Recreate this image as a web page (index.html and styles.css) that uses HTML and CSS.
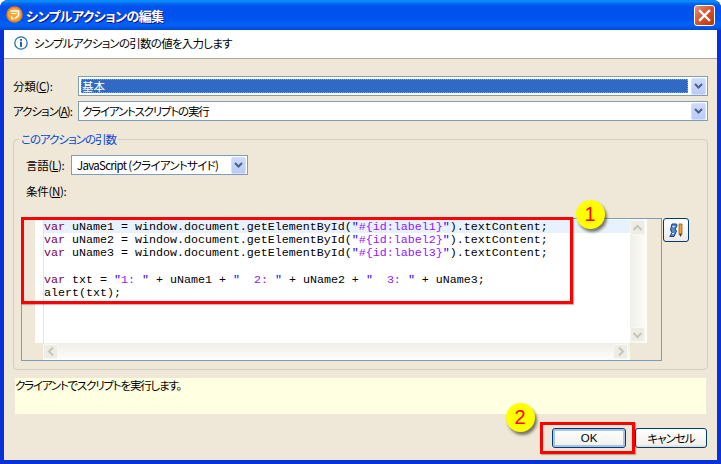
FILE: index.html
```html
<!DOCTYPE html>
<html lang="ja">
<head>
<meta charset="utf-8">
<title>シンプルアクションの編集</title>
<link rel="stylesheet" href="styles.css">
</head>
<body>
<div class="window">
  <header class="titlebar">
    <svg class="app-icon" width="17" height="17" viewBox="0 0 17 17"><circle cx="8.5" cy="8.5" r="8.2" fill="#e87f14"/><circle cx="8.5" cy="8.5" r="6.6" fill="#f9a63a"/><path d="M4.5 5h8v4.5l-3.500 3" fill="none" stroke="#fff" stroke-width="1.6"/><path d="M5 9.500l3 3.500-3 .5z" fill="#fff"/><path d="M5.500 7.500h5" stroke="#fff" stroke-width="1"/></svg>
    <h1 class="title">シンプルアクションの編集</h1>
    <button class="close" type="button" aria-label="閉じる"><svg width="15" height="15" viewBox="0 0 15 15"><path d="M3 3l9 9M12 3l-9 9" stroke="#fff" stroke-width="2.4" stroke-linecap="square"/></svg></button>
  </header>
  <div class="client">
    <div class="banner">
      <svg width="14" height="14" viewBox="0 0 14 14"><circle cx="7" cy="7" r="6.200" fill="#fff" stroke="#2a6fa8" stroke-width="1.300"/><rect x="6" y="5.800" width="2" height="5" fill="#1c5f9e"/><rect x="6" y="3" width="2" height="1.800" fill="#1c5f9e"/></svg>
      <span class="banner-text">シンプルアクションの引数の値を入力します</span>
    </div>
    <div class="content">
      <div class="form">
        <label class="label">分類(<u>C</u>):</label>
        <div class="combo">
          <span class="combo-value selected">基本</span>
          <span class="combo-btn"><svg width="9" height="7" viewBox="0 0 9 7"><path d="M1 1l3.500 3.500L8 1" fill="none" stroke="#4d6185" stroke-width="2"/></svg></span>
        </div>
        <label class="label label-tight">アクション(<u>A</u>):</label>
        <div class="combo">
          <span class="combo-value">クライアントスクリプトの実行</span>
          <span class="combo-btn"><svg width="9" height="7" viewBox="0 0 9 7"><path d="M1 1l3.500 3.500L8 1" fill="none" stroke="#4d6185" stroke-width="2"/></svg></span>
        </div>
      </div>
      <fieldset class="group">
        <legend class="legend">このアクションの引数</legend>
        <div class="lang-row">
          <label class="label lang-label">言語(<u>L</u>):</label>
          <div class="combo lang-combo">
            <span class="combo-value lang-value">JavaScript (クライアントサイド)</span>
            <span class="combo-btn"><svg width="9" height="7" viewBox="0 0 9 7"><path d="M1 1l3.500 3.500L8 1" fill="none" stroke="#4d6185" stroke-width="2"/></svg></span>
          </div>
        </div>
        <div class="cond-row label">条件(<u>N</u>):</div>
        <div class="editor-row">
          <div class="editor">
            <div class="editor-main">
              <div class="gutter"></div>
              <div class="ruler"></div>
              <pre class="code"><span class="line current"><b class="kw">var</b> uName1 = window.document.getElementById(<i class="str">"</i><i class="el">#{id:label1}</i><i class="str">"</i>).textContent;</span><span class="line"><b class="kw">var</b> uName2 = window.document.getElementById(<i class="str">"</i><i class="el">#{id:label2}</i><i class="str">"</i>).textContent;</span><span class="line"><b class="kw">var</b> uName3 = window.document.getElementById(<i class="str">"</i><i class="el">#{id:label3}</i><i class="str">"</i>).textContent;</span><span class="line"> </span><span class="line"><b class="kw">var</b> txt = <i class="str">"</i><i class="el">1: </i><i class="str">"</i> + uName1 + <i class="str">"  </i><i class="el">2: </i><i class="str">"</i> + uName2 + <i class="str">"  </i><i class="el">3: </i><i class="str">"</i> + uName3;</span><span class="line">alert(txt);</span></pre>
              <div class="vscroll">
                <span class="sb-btn"><svg width="11" height="8" viewBox="0 0 11 8"><path d="M1.500 6l4-4 4 4" fill="none" stroke="#c6c5bb" stroke-width="2"/></svg></span>
                <span class="sb-btn"><svg width="11" height="8" viewBox="0 0 11 8"><path d="M1.500 2l4 4 4-4" fill="none" stroke="#c6c5bb" stroke-width="2"/></svg></span>
              </div>
              <div class="pad"></div>
            </div>
            <div class="hscroll">
              <span class="sb-btn"><svg width="8" height="11" viewBox="0 0 8 11"><path d="M6 1.500l-4 4 4 4" fill="none" stroke="#c6c5bb" stroke-width="2"/></svg></span>
              <span class="sb-btn"><svg width="8" height="11" viewBox="0 0 8 11"><path d="M2 1.500l4 4-4 4" fill="none" stroke="#c6c5bb" stroke-width="2"/></svg></span>
            </div>
          </div>
          <button class="tool" type="button" aria-label="スクリプト"><svg width="14" height="15" viewBox="0 0 14 15"><path d="M3 1h4.500l.5 2-2 3 1.500 2L5 13.500H.8L3 9.500 1.500 7z" fill="#4f8ddc" stroke="#123f86" stroke-width="1"/><path d="M3.500 3.500h2M3 10.500h2" stroke="#fff" stroke-width="1"/><rect x="10" y="1" width="3" height="10" fill="#f0a030" stroke="#8a5414" stroke-width=".7"/><path d="M10 11h3l-1.500 3z" fill="#4a3a20"/></svg></button>
        </div>
      </fieldset>
      <div class="hint">クライアントでスクリプトを実行します。</div>
      <div class="buttons">
        <button class="btn btn-ok" type="button">OK</button>
        <button class="btn btn-cancel" type="button">キャンセル</button>
      </div>
    </div>
  </div>
  <div class="mark-box mark-code"></div>
  <div class="mark-box mark-ok"></div>
  <div class="badge badge-one">1</div>
  <div class="badge badge-two">2</div>
</div>
</body>
</html>
```
FILE: styles.css
```css
* { box-sizing: border-box; }
html, body { margin: 0; padding: 0; background: #fff; }
.window {
  position: relative;
  width: 721px;
  height: 464px;
  overflow: hidden;
  background: #0831d9;
  border-radius: 8px 8px 0 0;
  font: 11.5px/16px "Noto Sans CJK JP", "Liberation Sans", sans-serif;
  font-feature-settings: "palt";
  letter-spacing: -.75px;
  color: #000;
  display: flex;
  flex-direction: column;
}
.titlebar {
  height: 30px;
  flex: none;
  display: flex;
  align-items: center;
  padding: 0 6px;
  background: linear-gradient(#0a7cf0 0, #0997ff 1px, #0a6cf0 3px, #0053ee 6px, #0050ee 11px, #0055f0 20px, #0062f8 24px, #005ae8 27px, #0046d5 30px);
}
.app-icon { flex: none; margin-top: -1px; }
.title {
  flex: 1;
  margin: 2px 0 0 3px;
  font-size: 13px;
  font-weight: 700;
  line-height: 16px;
  letter-spacing: -.6px;
  color: #fff;
  text-shadow: 1px 1px 0 #0f1089;
}
.close {
  width: 21px;
  height: 21px;
  padding: 0;
  display: flex;
  align-items: center;
  justify-content: center;
  border: 1px solid #fff;
  border-radius: 3px;
  background: linear-gradient(135deg, #e8917a, #d5522c 50%, #b93209);
}
.client {
  flex: 1;
  margin: 0 4px 4px;
  display: flex;
  flex-direction: column;
  background: #efe7d8;
}
.banner {
  height: 29px;
  flex: none;
  display: flex;
  align-items: center;
  padding: 0 0 2px 10px;
  background: #fff;
  border-bottom: 1px solid #aca899;
}
.banner-text { margin-left: 6px; }
.content { flex: 1; padding: 17px 9px 0; display: flex; flex-direction: column; }
.form { display: grid; grid-template-columns: 65px 630px; row-gap: 5px; align-items: center; }
.label { white-space: nowrap; letter-spacing: -.3px; }
.label-tight { letter-spacing: -1px; }
.combo {
  height: 20px;
  display: flex;
  align-items: center;
  padding: 1px;
  background: #fff;
  border: 1px solid #7f9db9;
  letter-spacing: -1.2px;
}
.combo-value { flex: 1; padding-left: 2px; white-space: nowrap; overflow: hidden; }
.combo-value.selected {
  height: 14px;
  margin: 0 3px 1px 1px;
  padding-left: 1px;
  line-height: 14px;
  letter-spacing: 0;
  overflow: visible;
  color: #fff;
  background: #316ac5;
  outline: 1px dotted #d89a30;
  outline-offset: -1px;
}
.combo-btn {
  width: 15px;
  height: 17px;
  flex: none;
  display: flex;
  align-items: center;
  justify-content: center;
  border-radius: 2px;
  background: linear-gradient(#cddafb, #b9cbf6);
  border: 1px solid #d6e0fb;
}
.group {
  margin: 10px 0 0;
  padding: 0 6px 7px 7px;
  min-width: 0;
  height: 239px;
  border: 1px solid #d0d0bf;
  border-radius: 4px;
}
.legend { margin-left: -2px; padding: 0 2px; line-height: 16px; color: #0046d5; letter-spacing: -1px; }
.lang-row { display: flex; align-items: center; margin-top: 8px; padding-left: 5px; }
.lang-label { width: 45px; }
.lang-combo { width: 177px; }
.lang-value { padding-left: 4px; letter-spacing: -.7px; }
.cond-row { margin-top: 8px; padding-left: 5px; }
.editor-row { display: flex; align-items: flex-start; margin-top: 19px; }
.editor {
  width: 641px;
  height: 143px;
  flex: none;
  display: flex;
  flex-direction: column;
  border: 1px solid #7f9db9;
}
.editor-main { flex: 1; display: flex; min-height: 0; }
.gutter { width: 13px; flex: none; }
.ruler { width: 9px; flex: none; background: #fff; border-right: 1px solid #e8e4dc; }
.code {
  flex: 1;
  margin: 0;
  padding: 1px 0 0;
  background: #fff;
  font: 11.67px/13.2px "Liberation Mono", monospace;
  font-feature-settings: normal;
  letter-spacing: 0;
}
.line { display: block; height: 13.2px; padding-top: 1px; white-space: pre; }
.current { background: #e8f2fe; }
.kw { font-weight: 400; color: #7f0055; }
.str { font-style: normal; color: #2a00ff; }
.el { font-style: normal; color: #9314ff; }
.vscroll {
  width: 17px;
  flex: none;
  padding: 1px 1px 1px 0;
  display: flex;
  flex-direction: column;
  justify-content: space-between;
  background: linear-gradient(90deg, #f0efe9, #fdfdfa);
}
.pad { width: 14px; flex: none; }
.hscroll {
  height: 17px;
  flex: none;
  margin: 0 31px 0 21px;
  padding: 1px 2px 1px 0;
  display: flex;
  justify-content: space-between;
  background: linear-gradient(#f0efe9, #fdfdfa);
}
.sb-btn {
  width: 15px;
  height: 15px;
  flex: none;
  display: flex;
  align-items: center;
  justify-content: center;
  border: 1px solid #f8f7f2;
  border-radius: 2px;
  background: #eeede5;
}
.tool {
  width: 26px;
  height: 24px;
  flex: none;
  margin: 0 0 0 1px;
  padding: 0;
  display: flex;
  align-items: center;
  justify-content: center;
  border: 1px solid #003c74;
  border-radius: 3px;
  background: linear-gradient(#fff, #ecebe5);
}
.hint {
  height: 36px;
  flex: none;
  margin: 8px 2px 0;
  line-height: 15px;
  letter-spacing: -1.2px;
  background: #ffffe1;
}
.buttons { display: flex; justify-content: flex-end; gap: 9px; margin: 14px 1px 0 0; }
.btn {
  height: 20px;
  padding: 0;
  font: inherit;
  line-height: 16px;
  color: #000;
  border: 1px solid #003c74;
  border-radius: 3px;
  background: linear-gradient(#fff, #f3f2ec 85%, #dcd8ce);
}
.btn-ok { width: 74px; box-shadow: inset 0 0 0 2px #a9c4ea; letter-spacing: 0; font-family: "Liberation Sans", sans-serif; }
.btn-cancel { width: 72px; letter-spacing: -1px; }
.mark-box { position: absolute; border: 3px solid #f00; box-shadow: 1px 1px 1px rgba(0,0,0,.25); }
.mark-code { left: 21px; top: 217px; width: 552px; height: 87px; }
.mark-ok { left: 540px; top: 422px; width: 95px; height: 32px; }
.badge {
  position: absolute;
  width: 29px;
  height: 29px;
  border-radius: 50%;
  background: #ff0;
  color: #f00;
  font: 20px/29px "Liberation Sans", sans-serif;
  letter-spacing: 0;
  text-align: center;
  box-shadow: 2px 3px 3px rgba(40,40,20,.6);
}
.badge-one { left: 575.5px; top: 199.5px; }
.badge-two { left: 505.5px; top: 402.5px; }
```
